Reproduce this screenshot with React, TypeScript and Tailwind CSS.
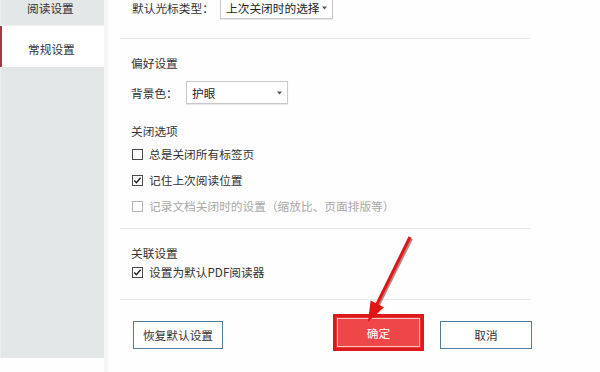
import React from "react";

const font = { fontFamily: '"Noto Sans CJK SC", "Noto Sans", sans-serif' };

function Caret() {
  return (
    <svg width="5" height="4" viewBox="0 0 5 4" className="shrink-0">
      <path d="M0 0.5 L5 0.5 L2.5 3.5 Z" fill="#555" />
    </svg>
  );
}

function Check({ checked, disabled }: { checked?: boolean; disabled?: boolean }) {
  const c = disabled ? "#b5b5b5" : "#4a4a4a";
  return (
    <svg width="11" height="11" viewBox="0 0 11 11" className="shrink-0">
      <rect x="0.5" y="0.5" width="10" height="10" fill="#fff" stroke={c} strokeWidth="1" />
      {checked && <path d="M2.3 5.6 L4.4 7.8 L8.6 2.8" fill="none" stroke="#222" strokeWidth="1.4" />}
    </svg>
  );
}

function Select({ text, w }: { text: string; w: string }) {
  return (
    <div
      className={`${w} h-[23px] flex items-center justify-between pl-[5px] pr-[5px] bg-white border border-[#c9c9c9] shadow-[0_1px_1px_rgba(0,0,0,0.08)] text-[#222]`}
    >
      <span>{text}</span>
      <Caret />
    </div>
  );
}

export default function App() {
  return (
    <div
      className="relative w-[600px] h-[372px] flex overflow-hidden bg-[#fefefe] text-[11.7px] leading-[16px] text-[#333]"
      style={font}
    >
      {/* Sidebar */}
      <div className="w-[104px] h-full bg-[#e4e7e7] flex flex-col -mt-[14px] shrink-0 border-l border-[#eceeee]">
        <div className="h-[40px] flex items-center pt-[5px] pl-[26px] text-[#333] border-b border-[#eef0f0]">
          阅读设置
        </div>
        <div className="h-[41px] flex items-center pt-[5px] pl-[26px] bg-white border-l-[2px] border-[#a33a48] -ml-px text-[#333]">
          常规设置
        </div>
      </div>
      <div className="w-[4px] h-full bg-[#f6f6f6]" />

      {/* Main */}
      <div className="flex flex-col pl-[12px] w-[426px]">
        <div className="flex items-center pl-[12px] -mt-[4px] h-[23px]">
          <span className="w-[88px]">默认光标类型：</span>
          <Select text="上次关闭时的选择" w="w-[113px]" />
        </div>
        <div className="mt-[19px] h-px w-[410px] bg-[#e6e6e6]" />

        <div className="pl-[11px] mt-[16px]">偏好设置</div>
        <div className="flex items-center pl-[11px] mt-[10px] h-[23px]">
          <span className="w-[55px]">背景色：</span>
          <Select text="护眼" w="w-[102px]" />
        </div>

        <div className="pl-[11px] mt-[19px]">关闭选项</div>
        <div className="flex items-center gap-[6px] pl-[12px] mt-[7px]">
          <Check />
          <span>总是关闭所有标签页</span>
        </div>
        <div className="flex items-center gap-[6px] pl-[12px] mt-[10px]">
          <Check checked />
          <span>记住上次阅读位置</span>
        </div>
        <div className="flex items-center gap-[6px] pl-[12px] mt-[10px] text-[#a8a8a8]">
          <Check disabled />
          <span>记录文档关闭时的设置（缩放比、页面排版等）</span>
        </div>
        <div className="mt-[14px] h-px w-[410px] bg-[#e6e6e6]" />

        <div className="pl-[11px] mt-[16px]">关联设置</div>
        <div className="flex items-center gap-[6px] pl-[12px] mt-[3px]">
          <Check checked />
          <span>设置为默认PDF阅读器</span>
        </div>
        <div className="mt-[19px] h-px w-[410px] bg-[#e6e6e6]" />

        <div className="flex items-start mt-[14px] pl-[13px]">
          <div className="mt-[7px] w-[90px] h-[28px] flex items-center justify-center border border-[#4f7f9c] bg-white text-[#333]">
            恢复默认设置
          </div>
          <div className="ml-[110px] w-[91px] h-[37px] border-[3px] border-[#dc1a1c] bg-[#e83434] p-px">
            <div className="w-full h-full border border-[#f7c2c2] bg-[#ef4747] flex items-center justify-center text-white">
              确定
            </div>
          </div>
          <div className="mt-[7px] ml-[16px] w-[92px] h-[28px] flex items-center justify-center border border-[#4f7f9c] bg-white text-[#333]">
            取消
          </div>
        </div>
      </div>

      {/* Annotation arrow */}
      <svg className="absolute left-0 top-0 pointer-events-none" width="600" height="372" viewBox="0 0 600 372">
        <line x1="411.5" y1="238.5" x2="378" y2="306" stroke="#6b0a0a" strokeOpacity="0.5" strokeWidth="3" />
        <line x1="410" y1="237" x2="376.5" y2="305" stroke="#e01616" strokeWidth="3" />
        <polygon points="368,322 370.6,300.5 384,307.2" fill="#e01616" />
      </svg>
    </div>
  );
}
